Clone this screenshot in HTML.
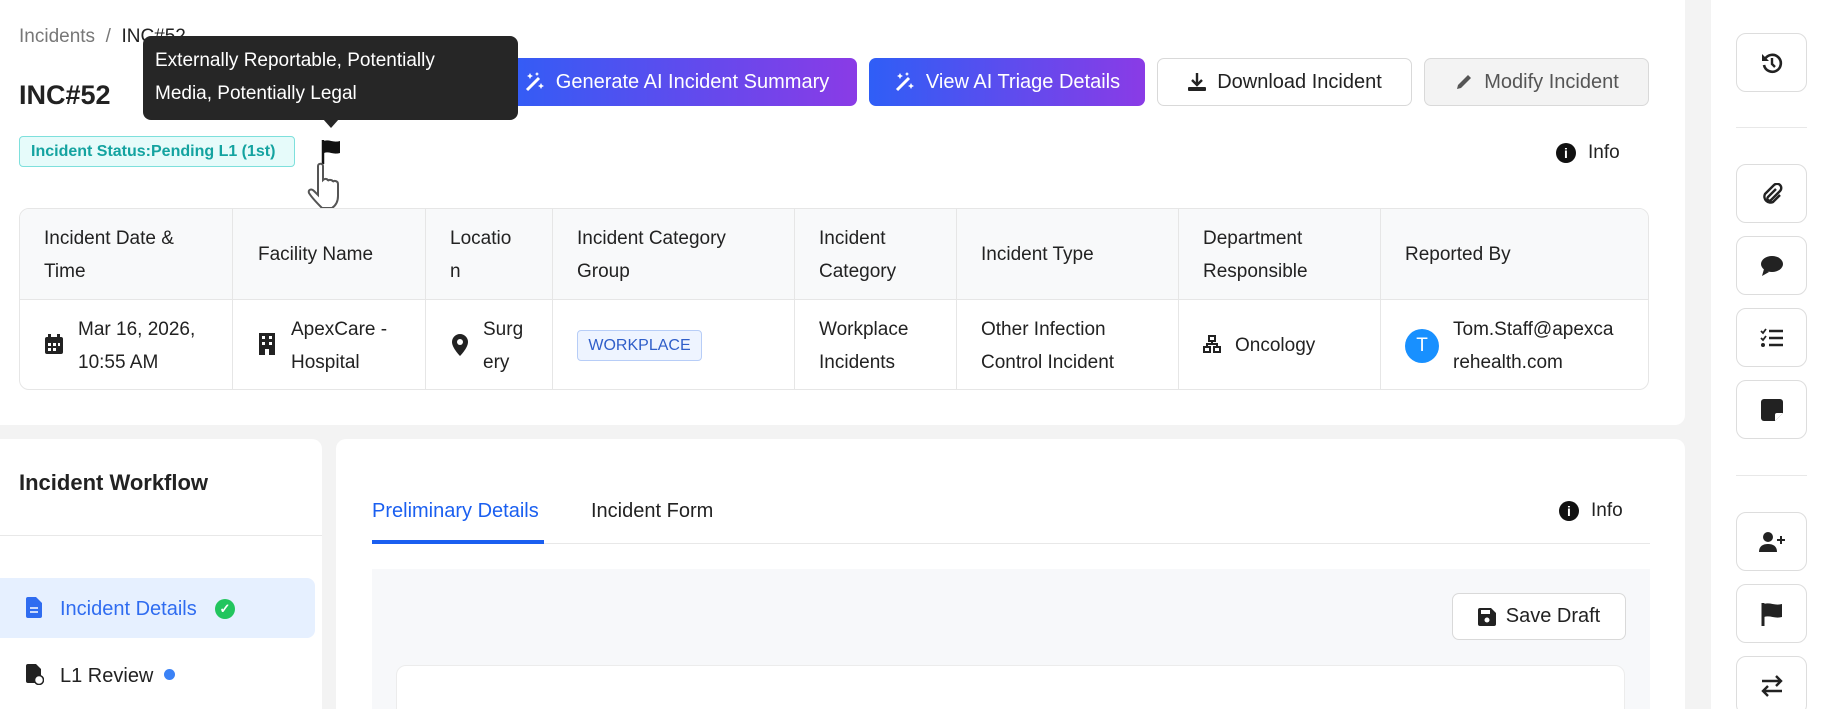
<!DOCTYPE html>
<html><head><meta charset="utf-8"><style>
*{box-sizing:border-box;margin:0;padding:0}
html,body{width:1821px;height:709px;overflow:hidden}
body{background:#f3f3f3;font-family:"Liberation Sans",sans-serif;color:#222;position:relative}
.a{position:absolute}
.card{background:#fff}
.btn{position:absolute;height:48px;border-radius:7px;display:flex;align-items:center;justify-content:center;gap:10px;font-size:20px}
.grad{background:linear-gradient(90deg,#2f5ef6,#8a3be6);color:#fff}
.th,.td{position:absolute;font-size:19px;line-height:33px;color:#222}
.vl{position:absolute;width:1px;background:#e6e6e6}
.sb{position:absolute;left:1736px;width:71px;height:59px;border:1px solid #ddd;border-radius:10px;background:#fff;display:flex;align-items:center;justify-content:center}
</style></head><body>
<div class="a card" style="left:0;top:0;width:1685px;height:425px;border-radius:0 0 10px 0"></div>
<div class="a" style="left:19px;top:26px;font-size:19px;color:#777">Incidents &nbsp;/&nbsp; <span style="color:#222">INC#52</span></div>
<div class="a" style="left:19px;top:80px;font-size:27px;font-weight:bold;color:#222">INC#52</div>

<div class="btn grad" style="left:496px;top:58px;width:361px"><svg width="22" height="22" viewBox="0 0 22 22"><path d="M3 19L15 7" stroke="#fff" stroke-width="3"/><path d="M6 2l1 2 2 1-2 1-1 2-1-2-2-1 2-1zM17 12l1 2 2 1-2 1-1 2-1-2-2-1 2-1zM13 1l.7 1.3 1.3.7-1.3.7L13 5l-.7-1.3L11 3l1.3-.7z" fill="#fff"/></svg>Generate AI Incident Summary</div>
<div class="btn grad" style="left:869px;top:58px;width:276px"><svg width="22" height="22" viewBox="0 0 22 22"><path d="M3 19L15 7" stroke="#fff" stroke-width="3"/><path d="M6 2l1 2 2 1-2 1-1 2-1-2-2-1 2-1zM17 12l1 2 2 1-2 1-1 2-1-2-2-1 2-1zM13 1l.7 1.3 1.3.7-1.3.7L13 5l-.7-1.3L11 3l1.3-.7z" fill="#fff"/></svg>View AI Triage Details</div>
<div class="btn" style="left:1157px;top:58px;width:255px;border:1px solid #d9d9d9;background:#fff"><svg width="20" height="20" viewBox="0 0 20 20"><path d="M10 1v11M5 8l5 5 5-5" stroke="#222" stroke-width="2.4" fill="none"/><rect x="1" y="15" width="18" height="4" rx="1" fill="#222"/></svg>Download Incident</div>
<div class="btn" style="left:1424px;top:58px;width:225px;border:1px solid #d9d9d9;background:#f3f3f3;color:#555"><svg width="20" height="20" viewBox="0 0 20 20"><path d="M3 17l1-4L14 3l3 3L7 16z" fill="#555"/></svg>Modify Incident</div>

<div class="a" style="left:143px;top:36px;width:375px;height:84px;background:#262626;border-radius:8px;color:#fff;font-size:19px;line-height:33px;padding:8px 12px;white-space:nowrap">Externally Reportable, Potentially<br>Media, Potentially Legal</div>
<div class="a" style="left:323px;top:119px;width:0;height:0;border-left:8px solid transparent;border-right:8px solid transparent;border-top:9px solid #262626"></div>

<div class="a" style="left:19px;top:136px;width:276px;height:31px;border:1px solid #7ee0dc;background:#e6fbfa;border-radius:4px;color:#14a3a0;font-size:16px;font-weight:bold;line-height:29px;padding-left:11px">Incident Status:Pending L1 (1st)</div>
<svg class="a" style="left:320px;top:138px" width="24" height="26" viewBox="0 0 24 26"><path d="M3 2v24" stroke="#111" stroke-width="2.5"/><path d="M4 3c5-2 9 2 16 0v12c-7 2-11-2-16 0z" fill="#111"/></svg>
<svg class="a" style="left:304px;top:162px" width="40" height="50" viewBox="0 0 40 50"><path d="M14 4c0-3 5-3 5 0v14c2-2 5-1 5 1 1-2 5-1 5 1 1-2 5-1 5 2v12c0 6-3 10-6 12H18c-4-4-10-10-13-15-1-3 2-5 5-2l4 4z" fill="#fff" stroke="#555" stroke-width="2"/></svg>

<div class="a" style="left:1556px;top:142px;font-size:19px;display:flex;align-items:center;gap:12px"><span style="width:20px;height:20px;border-radius:50%;background:#111;color:#fff;font-size:14px;font-weight:bold;text-align:center;line-height:20px">i</span>Info</div>

<div class="a" style="left:19px;top:208px;width:1630px;height:182px;border:1px solid #e6e6e6;border-radius:10px;overflow:hidden;background:#fff">
  <div class="a" style="left:0;top:0;width:100%;height:91px;background:#f8f9fa;border-bottom:1px solid #e6e6e6"></div>
</div>
<div class="vl" style="left:232px;top:209px;height:180px"></div>
<div class="vl" style="left:425px;top:209px;height:180px"></div>
<div class="vl" style="left:552px;top:209px;height:180px"></div>
<div class="vl" style="left:794px;top:209px;height:180px"></div>
<div class="vl" style="left:956px;top:209px;height:180px"></div>
<div class="vl" style="left:1178px;top:209px;height:180px"></div>
<div class="vl" style="left:1380px;top:209px;height:180px"></div>

<div class="th" style="left:44px;top:222px">Incident Date &amp;<br>Time</div>
<div class="th" style="left:258px;top:238px">Facility Name</div>
<div class="th" style="left:450px;top:222px">Locatio<br>n</div>
<div class="th" style="left:577px;top:222px">Incident Category<br>Group</div>
<div class="th" style="left:819px;top:222px">Incident<br>Category</div>
<div class="th" style="left:981px;top:238px">Incident Type</div>
<div class="th" style="left:1203px;top:222px">Department<br>Responsible</div>
<div class="th" style="left:1405px;top:238px">Reported By</div>

<svg class="a" style="left:44px;top:333px" width="20" height="22" viewBox="0 0 20 22"><rect x="1" y="4" width="18" height="17" rx="2" fill="#222"/><rect x="4" y="1" width="3" height="5" fill="#222"/><rect x="13" y="1" width="3" height="5" fill="#222"/><g fill="#fff"><rect x="4" y="10" width="3" height="3"/><rect x="9" y="10" width="3" height="3"/><rect x="14" y="10" width="2" height="3"/><rect x="4" y="15" width="3" height="3"/><rect x="9" y="15" width="3" height="3"/></g></svg>
<div class="td" style="left:78px;top:313px">Mar 16, 2026,<br>10:55 AM</div>
<svg class="a" style="left:259px;top:333px" width="16" height="22" viewBox="0 0 16 22"><rect x="0" y="0" width="16" height="22" fill="#222"/><g fill="#fff"><rect x="3" y="3" width="3" height="3"/><rect x="10" y="3" width="3" height="3"/><rect x="3" y="9" width="3" height="3"/><rect x="10" y="9" width="3" height="3"/><rect x="6" y="16" width="4" height="6"/></g></svg>
<div class="td" style="left:291px;top:313px">ApexCare -<br>Hospital</div>
<svg class="a" style="left:452px;top:334px" width="16" height="22" viewBox="0 0 16 22"><path d="M8 0a8 8 0 0 0-8 8c0 6 8 14 8 14s8-8 8-14a8 8 0 0 0-8-8z" fill="#222"/><circle cx="8" cy="8" r="3" fill="#fff"/></svg>
<div class="td" style="left:483px;top:313px">Surg<br>ery</div>
<div class="a" style="left:577px;top:330px;width:125px;height:31px;border:1px solid #b7cdf7;background:#eef4ff;border-radius:4px;color:#2f5ec9;font-size:16px;line-height:29px;text-align:center">WORKPLACE</div>
<div class="td" style="left:819px;top:313px">Workplace<br>Incidents</div>
<div class="td" style="left:981px;top:313px">Other Infection<br>Control Incident</div>
<svg class="a" style="left:1203px;top:335px" width="18" height="18" viewBox="0 0 18 18"><g fill="none" stroke="#222" stroke-width="2"><rect x="6" y="1" width="6" height="5"/><rect x="1" y="12" width="6" height="5"/><rect x="11" y="12" width="6" height="5"/><path d="M9 6v3M4 12V9h10v3"/></g></svg>
<div class="td" style="left:1235px;top:329px">Oncology</div>
<div class="a" style="left:1405px;top:329px;width:34px;height:34px;border-radius:50%;background:#1890ff;color:#fff;font-size:19px;text-align:center;line-height:34px">T</div>
<div class="td" style="left:1453px;top:313px">Tom.Staff@apexca<br>rehealth.com</div>

<div class="a card" style="left:0;top:439px;width:322px;height:280px;border-radius:0 10px 0 0"></div>
<div class="a" style="left:19px;top:470px;font-size:22px;font-weight:bold;color:#222">Incident Workflow</div>
<div class="a" style="left:0;top:535px;width:322px;height:1px;background:#e8e8e8"></div>
<div class="a" style="left:0;top:578px;width:315px;height:60px;background:#e6f0ff;border-radius:0 8px 8px 0"></div>
<svg class="a" style="left:26px;top:597px" width="16" height="21" viewBox="0 0 16 21"><path d="M0 2a2 2 0 0 1 2-2h8l6 6v13a2 2 0 0 1-2 2H2a2 2 0 0 1-2-2z" fill="#2f6cf0"/><path d="M4 11h8M4 15h8" stroke="#fff" stroke-width="1.5"/></svg>
<div class="a" style="left:60px;top:598px;font-size:20px;color:#2f6cf0">Incident Details</div>
<div class="a" style="left:215px;top:599px;width:20px;height:20px;border-radius:50%;background:#22c55e;color:#fff;font-size:13px;text-align:center;line-height:20px;font-weight:bold">✓</div>
<svg class="a" style="left:26px;top:664px" width="18" height="21" viewBox="0 0 18 21"><path d="M0 2a2 2 0 0 1 2-2h8l5 5v14H2a2 2 0 0 1-2-2z" fill="#222"/><circle cx="13" cy="16" r="4.5" fill="#fff" stroke="#222" stroke-width="1.5"/></svg>
<div class="a" style="left:60px;top:665px;font-size:20px;color:#222">L1 Review</div>
<div class="a" style="left:164px;top:669px;width:11px;height:11px;border-radius:50%;background:#3b82f6"></div>

<div class="a card" style="left:336px;top:439px;width:1349px;height:280px;border-radius:10px 10px 0 0"></div>
<div class="a" style="left:372px;top:500px;font-size:20px;color:#1a5ff0">Preliminary Details</div>
<div class="a" style="left:591px;top:500px;font-size:20px;color:#222">Incident Form</div>
<div class="a" style="left:1559px;top:500px;font-size:19px;display:flex;align-items:center;gap:12px"><span style="width:20px;height:20px;border-radius:50%;background:#111;color:#fff;font-size:14px;font-weight:bold;text-align:center;line-height:20px">i</span>Info</div>
<div class="a" style="left:372px;top:543px;width:1278px;height:1px;background:#e8e8e8"></div>
<div class="a" style="left:372px;top:540px;width:172px;height:4px;background:#1a5ff0"></div>
<div class="a" style="left:372px;top:569px;width:1278px;height:150px;background:#f7f8fa"></div>
<div class="btn" style="left:1452px;top:593px;width:174px;height:47px;border:1px solid #d9d9d9;background:#fff"><svg width="18" height="18" viewBox="0 0 18 18"><path d="M0 2a2 2 0 0 1 2-2h11l5 5v11a2 2 0 0 1-2 2H2a2 2 0 0 1-2-2z" fill="#222"/><rect x="3" y="2" width="9" height="4" fill="#fff"/><circle cx="9" cy="12" r="2.5" fill="#fff"/></svg>Save Draft</div>
<div class="a" style="left:396px;top:665px;width:1229px;height:60px;background:#fff;border:1px solid #ececec;border-radius:10px"></div>

<div class="a card" style="left:1711px;top:0;width:110px;height:709px"></div>
<div class="sb" style="top:33px"><svg width="24" height="24" viewBox="0 0 24 24"><path d="M5 8a8.5 8.5 0 1 1-1 6" fill="none" stroke="#222" stroke-width="2.6"/><path d="M2 3v7h7z" fill="#222"/><path d="M12 7v6l3 3" fill="none" stroke="#222" stroke-width="2.4"/></svg></div>
<div class="a" style="left:1736px;top:127px;width:71px;height:1px;background:#e8e8e8"></div>
<div class="sb" style="top:164px"><svg width="22" height="22" viewBox="0 0 22 22"><path d="M15 6l-8 8a2 2 0 0 0 3 3l9-9a4 4 0 0 0-6-6L4 11a6 6 0 0 0 8 8l7-7" fill="none" stroke="#222" stroke-width="2.4"/></svg></div>
<div class="sb" style="top:236px"><svg width="24" height="22" viewBox="0 0 24 22"><ellipse cx="12" cy="9" rx="11" ry="8" fill="#222"/><path d="M4 14l-2 7 7-4z" fill="#222"/></svg></div>
<div class="sb" style="top:308px"><svg width="24" height="20" viewBox="0 0 24 20"><path d="M1 3l2 2 3-4M1 10l2 2 3-4" fill="none" stroke="#222" stroke-width="1.8"/><circle cx="3" cy="17" r="2" fill="#222"/><path d="M9 3h14M9 10h14M9 17h14" stroke="#222" stroke-width="2.6"/></svg></div>
<div class="sb" style="top:380px"><svg width="22" height="22" viewBox="0 0 22 22"><path d="M0 3a3 3 0 0 1 3-3h16a3 3 0 0 1 3 3v11l-8 8H3a3 3 0 0 1-3-3z" fill="#222"/><path d="M14 22v-6a2 2 0 0 1 2-2h6" fill="#fff"/></svg></div>
<div class="a" style="left:1736px;top:475px;width:71px;height:1px;background:#e8e8e8"></div>
<div class="sb" style="top:512px"><svg width="26" height="20" viewBox="0 0 26 20"><circle cx="9" cy="5" r="5" fill="#222"/><path d="M0 20c0-6 4-8 9-8s9 2 9 8z" fill="#222"/><path d="M22 4v8M18 8h8" stroke="#222" stroke-width="2"/></svg></div>
<div class="sb" style="top:584px"><svg width="22" height="24" viewBox="0 0 22 24"><path d="M2 1v23" stroke="#222" stroke-width="3"/><path d="M3 2c6-2 11 2 18 0v13c-7 2-12-2-18 0z" fill="#222"/></svg></div>
<div class="sb" style="top:656px"><svg width="24" height="22" viewBox="0 0 24 22"><path d="M2 6h19M16 1l5 5-5 5M22 16H3M8 11l-5 5 5 5" fill="none" stroke="#222" stroke-width="2.4"/></svg></div>
</body></html>
